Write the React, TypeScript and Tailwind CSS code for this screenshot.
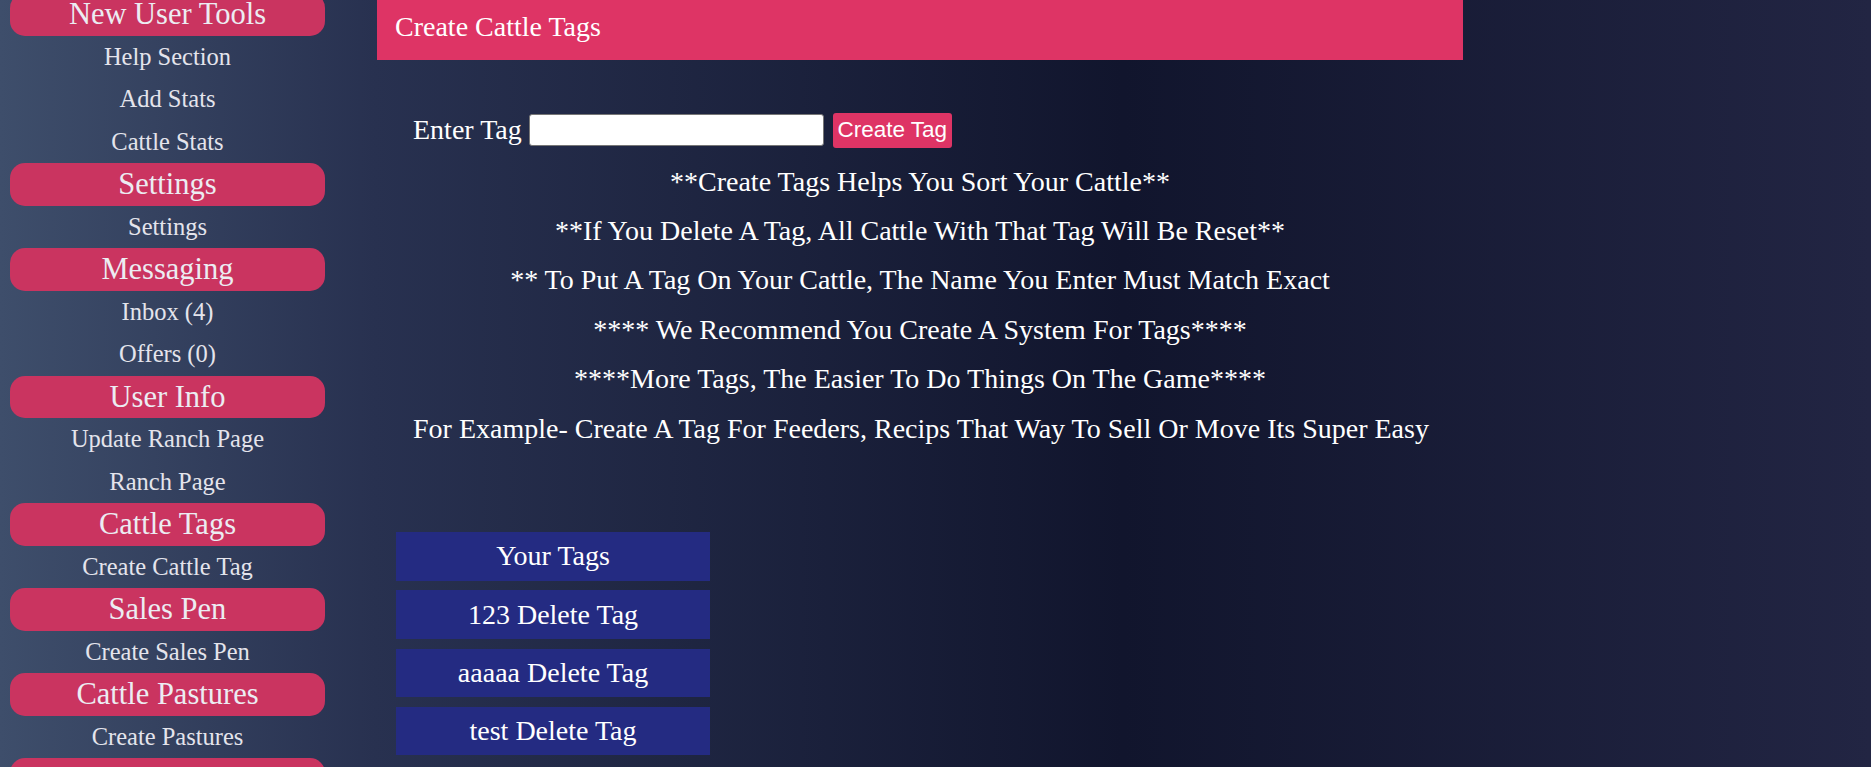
import React from 'react';

type NavItem = { kind: 'head' | 'link'; label: string };

const nav: NavItem[] = [
  { kind: 'head', label: 'New User Tools' },
  { kind: 'link', label: 'Help Section' },
  { kind: 'link', label: 'Add Stats' },
  { kind: 'link', label: 'Cattle Stats' },
  { kind: 'head', label: 'Settings' },
  { kind: 'link', label: 'Settings' },
  { kind: 'head', label: 'Messaging' },
  { kind: 'link', label: 'Inbox (4)' },
  { kind: 'link', label: 'Offers (0)' },
  { kind: 'head', label: 'User Info' },
  { kind: 'link', label: 'Update Ranch Page' },
  { kind: 'link', label: 'Ranch Page' },
  { kind: 'head', label: 'Cattle Tags' },
  { kind: 'link', label: 'Create Cattle Tag' },
  { kind: 'head', label: 'Sales Pen' },
  { kind: 'link', label: 'Create Sales Pen' },
  { kind: 'head', label: 'Cattle Pastures' },
  { kind: 'link', label: 'Create Pastures' },
  // next section starts below the fold, only its top edge shows
  { kind: 'head', label: '' },
];

const notes = [
  '**Create Tags Helps You Sort Your Cattle**',
  '**If You Delete A Tag, All Cattle With That Tag Will Be Reset**',
  '** To Put A Tag On Your Cattle, The Name You Enter Must Match Exact',
  '**** We Recommend You Create A System For Tags****',
  '****More Tags, The Easier To Do Things On The Game****',
  'For Example- Create A Tag For Feeders, Recips That Way To Sell Or Move Its Super Easy',
];

const tags = ['123', 'aaaaa', 'test'];

const Sidebar: React.FC = () => (
  <div className="w-[377px] shrink-0 pl-[10px] flex flex-col">
    {nav.map((item, i) =>
      item.kind === 'head' ? (
        <div
          key={i}
          className="w-[315px] h-[42.5px] shrink-0 rounded-[15px] bg-[#ca3460] text-[#ececf2] text-[30.5px] flex items-center justify-center leading-none whitespace-nowrap"
        >
          {item.label}
        </div>
      ) : (
        <div
          key={i}
          className="w-[315px] h-[42.5px] shrink-0 text-[#e4e4ec] text-[24.5px] flex items-center justify-center leading-none whitespace-nowrap"
        >
          {item.label}
        </div>
      )
    )}
  </div>
);

export default function App() {
  return (
    <div className="w-full h-[767px] overflow-hidden bg-[linear-gradient(to_right,#3e4e6b_0%,#283150_20%,#11152d_60%,#222543_100%)] font-['Liberation_Serif','Times_New_Roman',serif]">
      <div className="flex mt-[-7px]">
        <Sidebar />

        {/* main panel */}
        <div className="w-[1086px] shrink-0 flex flex-col">
          <div className="h-[67px] bg-[#de3465] flex items-center pl-[18px] text-white text-[28px]">
            Create Cattle Tags
          </div>

          <div className="px-[36px]">
            <div className="mt-[52px] h-[36px] flex items-center text-white text-[28px]">
              <span>Enter Tag</span>
              <input
                type="text"
                className="ml-[7px] w-[295px] h-[32px] bg-white border border-[#767676] rounded-[3px]"
              />
              <button className="ml-[9px] w-[119px] h-[35px] bg-[#de3465] rounded-[3px] text-white text-[22.5px] font-['Liberation_Sans',Arial,sans-serif] flex items-center justify-center leading-none">
                Create Tag
              </button>
            </div>

            <div className="mt-[8.7px] flex flex-col text-center text-white text-[28px]">
              {notes.map((n, i) => (
                <div key={i} className="h-[49.4px] leading-[49.4px] whitespace-nowrap">
                  {n}
                </div>
              ))}
            </div>
          </div>

          <div className="mt-[79px] ml-[19px] flex flex-col gap-[9.8px]">
            <div className="w-[314px] h-[48.5px] bg-[#242b82] text-white text-[28px] flex items-center justify-center">
              Your Tags
            </div>
            {tags.map((t) => (
              <div
                key={t}
                className="w-[314px] h-[48.5px] bg-[#242b82] text-white text-[28px] flex items-center justify-center"
              >
                {t} Delete Tag
              </div>
            ))}
          </div>
        </div>
      </div>
    </div>
  );
}
